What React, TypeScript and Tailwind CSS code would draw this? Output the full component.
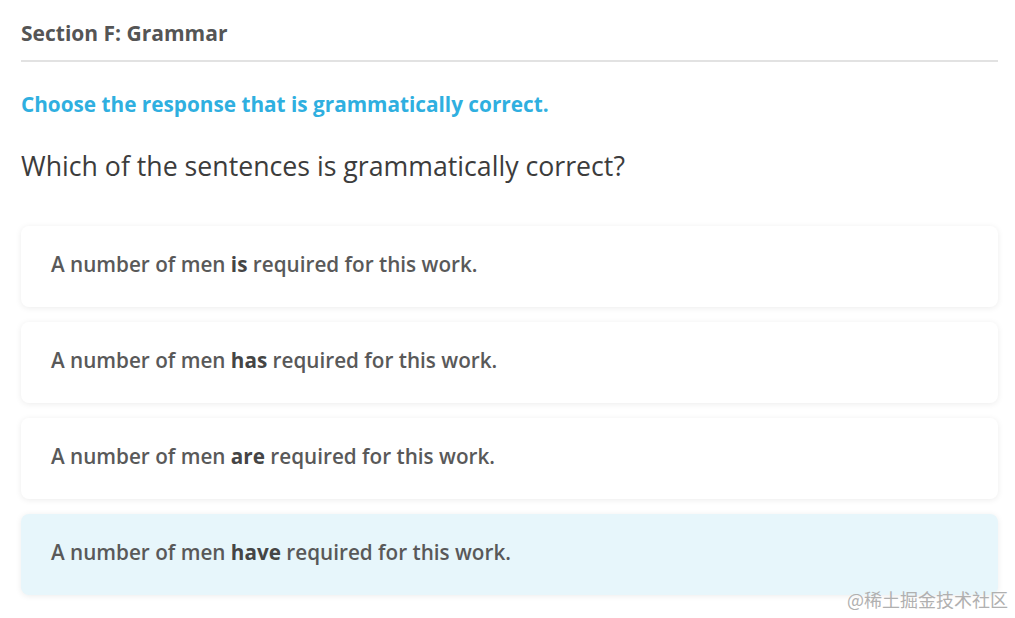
import React from 'react';

const OPTIONS = [
  { before: 'A number of men ', verb: 'is', after: ' required for this work.', selected: false },
  { before: 'A number of men ', verb: 'has', after: ' required for this work.', selected: false },
  { before: 'A number of men ', verb: 'are', after: ' required for this work.', selected: false },
  { before: 'A number of men ', verb: 'have', after: ' required for this work.', selected: true },
];

export default function App() {
  return (
    <main className="relative w-[1015px] h-[618px] overflow-hidden bg-white font-['Open_Sans',sans-serif]">
      <div className="px-[21px] pr-[17px]">
        {/* Section header */}
        <div className="pt-[19px] pb-[13px] border-b-2 border-[#e2e2e2]">
          <h2 className="text-[21px] leading-[28px] font-bold text-[#555555]">Section F: Grammar</h2>
        </div>

        <p className="mt-[28px] text-[20.75px] leading-[28px] font-bold text-[#2fafe0]">
          Choose the response that is grammatically correct.
        </p>

        <h1 className="mt-[30px] text-[26.7px] leading-[36px] text-[#3c3c3c]">
          Which of the sentences is grammatically correct?
        </h1>

        {/* Options */}
        <div className="mt-[42px] flex flex-col gap-[15px]">
          {OPTIONS.map((o) => (
            <div
              key={o.verb}
              className={`h-[81px] flex items-center px-[30px] pb-[3px] rounded-lg shadow-[0_1px_6px_rgba(0,0,0,0.08)] ${
                o.selected ? 'bg-[#e7f6fb]' : 'bg-white'
              }`}
            >
              <span className="text-[20.7px] font-semibold text-[#595959]">
                {o.before}
                <strong className="font-bold text-[#454545]">{o.verb}</strong>
                {o.after}
              </span>
            </div>
          ))}
        </div>
      </div>

      <span className="absolute right-[7px] bottom-[5px] text-[18px] text-[#b0b0b0] font-['Noto_Sans_CJK_SC',serif]">
        @稀土掘金技术社区
      </span>
    </main>
  );
}
